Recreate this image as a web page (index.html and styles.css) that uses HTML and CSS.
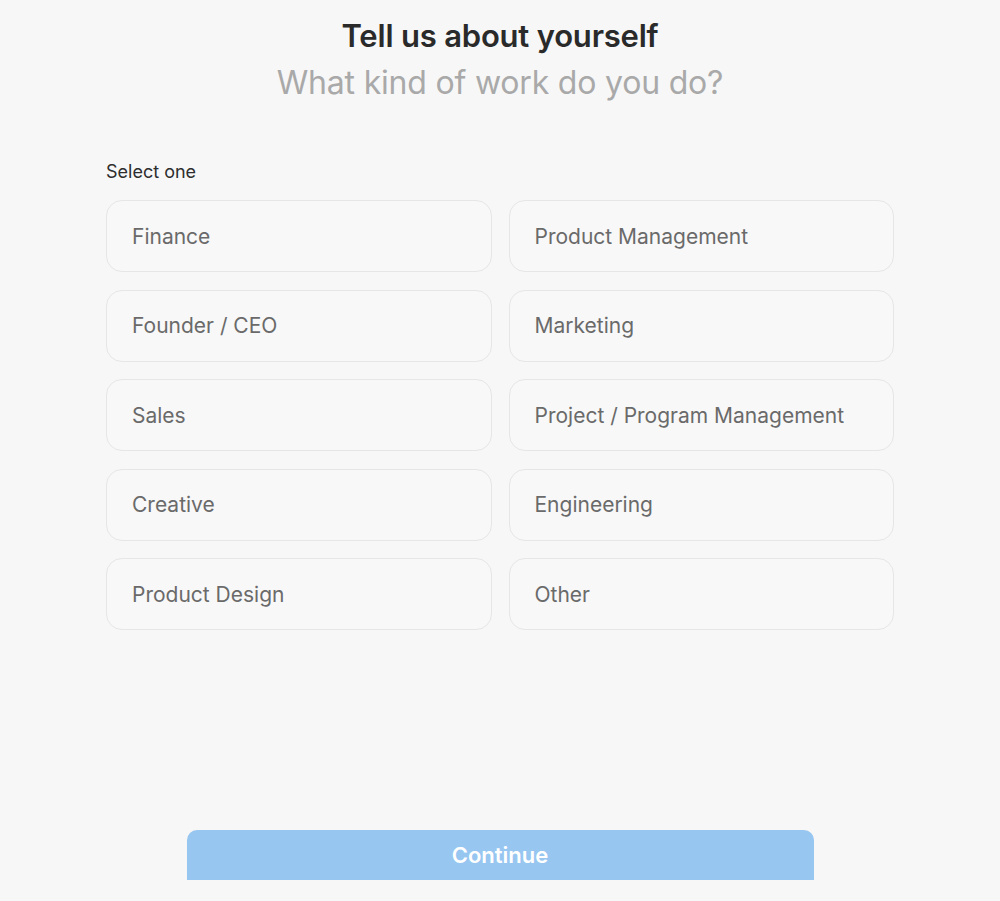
FILE: index.html
```html
<!DOCTYPE html>
<html lang="en">

<head>
    <meta charset="UTF-8">
    <meta name="viewport" content="width=device-width, initial-scale=1.0">
    <title>Tell us about yourself</title>
    <link rel="stylesheet" href="styles.css">
</head>

<body>

    <div class="page">
        <!-- Encabezado -->
        <header class="intro">
            <h1>Tell us about yourself</h1>
            <h2>What kind of work do you do?</h2>
        </header>

        <!-- Opciones -->
        <section class="options">
            <p class="hint">Select one</p>
            <div class="grid">
                <button class="option">Finance</button>
                <button class="option">Product Management</button>
                <button class="option">Founder / CEO</button>
                <button class="option">Marketing</button>
                <button class="option">Sales</button>
                <button class="option">Project / Program Management</button>
                <button class="option">Creative</button>
                <button class="option">Engineering</button>
                <button class="option">Product Design</button>
                <button class="option">Other</button>
            </div>
        </section>

        <button class="continue-btn">Continue</button>
    </div>

</body>

</html>
```

FILE: styles.css
```css
/* Reset */
* {
    margin: 0;
    padding: 0;
    box-sizing: border-box;
}

body {
    background-color: #f7f7f7;
    font-family: "Inter", "Liberation Sans", sans-serif;
    color: #2b2b2b;
}

.page {
    min-height: 100vh;
    display: flex;
    flex-direction: column;
    align-items: center;
    padding-top: 18px;
}

/* Encabezado */
.intro {
    text-align: center;
}

.intro h1 {
    font-size: 31px;
    line-height: 36px;
    font-weight: 600;
    letter-spacing: -0.2px;
    color: #2a2a2a;
}

.intro h2 {
    font-size: 32px;
    line-height: 38px;
    font-weight: 400;
    letter-spacing: -0.2px;
    color: #a9a9a9;
    margin-top: 10px;
}

/* Opciones */
.options {
    width: 788px;
    margin-top: 59px;
}

.hint {
    font-size: 18px;
    line-height: 22px;
    color: #2e2e2e;
    margin-bottom: 17px;
}

.grid {
    display: grid;
    grid-template-columns: 1fr 1fr;
    column-gap: 17px;
    row-gap: 17.5px;
}

.option {
    height: 72px;
    display: flex;
    align-items: center;
    padding-left: 25px;
    background-color: #f8f8f8;
    border: 1px solid #e6e6e6;
    border-radius: 16px;
    font-family: inherit;
    font-size: 21px;
    color: #6a6a6a;
    text-align: left;
    cursor: pointer;
}

.option:hover {
    border-color: #cfcfcf;
}

/* Botón continuar */
.continue-btn {
    width: 627px;
    height: 50px;
    margin-top: auto;
    margin-bottom: 21px;
    background-color: #97c6f1;
    border: none;
    border-radius: 10px 10px 0 0;
    color: #fff;
    font-family: inherit;
    font-size: 22px;
    font-weight: 600;
    cursor: pointer;
}
```
